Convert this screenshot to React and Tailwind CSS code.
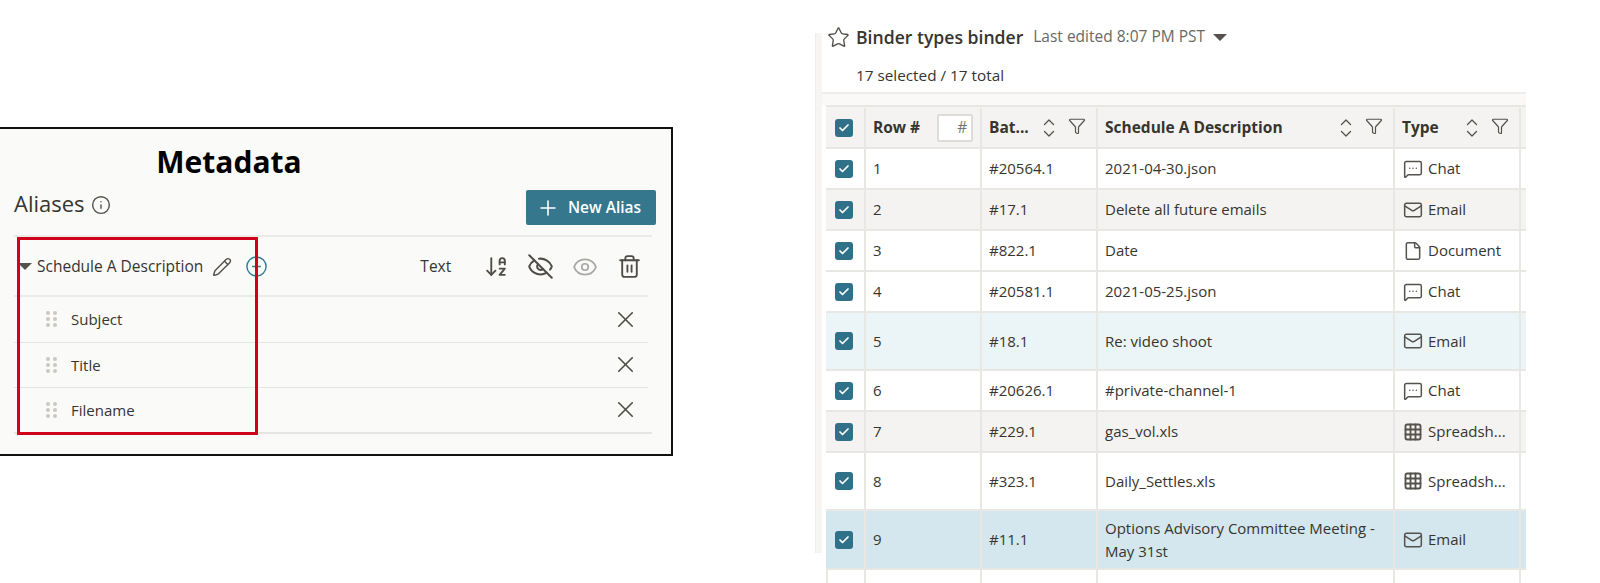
import React from "react";
import {
  ArrowDownAZ,
  Check,
  CirclePlus,
  Eye,
  EyeOff,
  File,
  Funnel,
  Grid3x3,
  Info,
  Mail,
  MessageSquareMore,
  Pencil,
  Plus,
  Star,
  Trash2,
  X,
} from "lucide-react";

const TYPES = {
  Chat: MessageSquareMore,
  Email: Mail,
  Document: File,
  "Spreadsh...": Grid3x3,
};

const ROWS = [
  { n: 1, bat: "#20564.1", desc: "2021-04-30.json", type: "Chat", h: "h-[41px]", bg: "bg-white" },
  { n: 2, bat: "#17.1", desc: "Delete all future emails", type: "Email", h: "h-[41px]", bg: "bg-[#f4f3f1]" },
  { n: 3, bat: "#822.1", desc: "Date", type: "Document", h: "h-[41px]", bg: "bg-white" },
  { n: 4, bat: "#20581.1", desc: "2021-05-25.json", type: "Chat", h: "h-[41px]", bg: "bg-white" },
  { n: 5, bat: "#18.1", desc: "Re: video shoot", type: "Email", h: "h-[58px]", bg: "bg-[#ebf4f7]" },
  { n: 6, bat: "#20626.1", desc: "#private-channel-1", type: "Chat", h: "h-[41px]", bg: "bg-white" },
  { n: 7, bat: "#229.1", desc: "gas_vol.xls", type: "Spreadsh...", h: "h-[41px]", bg: "bg-[#f4f3f1]" },
  { n: 8, bat: "#323.1", desc: "Daily_Settles.xls", type: "Spreadsh...", h: "h-[58px]", bg: "bg-white" },
  { n: 9, bat: "#11.1", desc: "Options Advisory Committee Meeting - May 31st", type: "Email", h: "h-[59px]", bg: "bg-[#d4e7ee]" },
];

const Checkbox = () => (
  <span className="flex h-[18px] w-[18px] items-center justify-center rounded-[3px] bg-[#2f7189]">
    <Check size={12} strokeWidth={3.5} className="text-white" />
  </span>
);

const SortFilter = ({ sortClass }) => (
  <>
    <svg width="12" height="20" viewBox="0 0 12 20" fill="none" stroke="#55524e" strokeWidth="1.3" strokeLinecap="round" strokeLinejoin="round" className={`shrink-0 ${sortClass}`}>
      <path d="M1.5 6.5 6 2l4.5 4.5" />
      <path d="M1.5 13.5 6 18l4.5-4.5" />
    </svg>
    <Funnel size={18} strokeWidth={1.6} className="ml-[13px] mb-[3px] shrink-0 text-[#55524e]" />
  </>
);

const AliasRow = ({ label }) => (
  <div className="flex h-[45.5px] items-center border-b border-[#e6e5e2] pl-[32px] pr-[9px] last:-mr-[4px] last:border-b-2 last:pr-[13px]">
    <span className="grid grid-cols-2 gap-x-[3px] gap-y-[2px]">
      {[0, 1, 2, 3, 4, 5].map((d) => (
        <span key={d} className="h-[4px] w-[4px] rounded-full bg-[#c9c8c5]" />
      ))}
    </span>
    <span className="ml-[14px] text-[15px] text-[#37352f]">{label}</span>
    <X size={27} strokeWidth={1.4} className="ml-auto text-[#4f4c48]" />
  </div>
);

const MetadataPanel = () => (
  <div className="relative mt-[127px] h-[329px] w-[673px] shrink-0 border-y-2 border-r-2 border-[#111] bg-[#fafaf8]">
    <h1 className="mt-[14px] w-[458px] text-center text-[30px] font-bold leading-[38px] text-black">Metadata</h1>
    <div className="mt-[9px] flex items-start justify-between pl-[14px] pr-[15px]">
      <div className="-mt-[2px] flex items-center gap-[6px]">
        <span className="text-[22px] leading-[30px] text-[#37352f]">Aliases</span>
        <Info size={20} strokeWidth={1.7} className="mt-[3px] text-[#55524e]" />
      </div>
      <button className="flex h-[35px] w-[130px] items-center justify-center gap-[8px] rounded-[2px] bg-[#35778d] pr-[5px] text-[15.5px] font-semibold text-white">
        <Plus size={24} strokeWidth={1.6} />
        New Alias
      </button>
    </div>
    <div className="mt-[10px] ml-[14px] mr-[19px] h-[60px] border-t-2 border-[#ecebe8] pt-[1px]">
      <div className="flex h-full items-center pl-[4px]">
        <span className="h-0 w-0 border-x-[7px] border-t-[7px] border-x-transparent border-t-[#55524e]" />
        <span className="ml-[5px] text-[15.5px] text-[#37352f]">Schedule A Description</span>
        <Pencil size={20} strokeWidth={1.7} className="ml-[9px] text-[#55524e]" />
        <CirclePlus size={23} strokeWidth={1.5} className="ml-[13px] text-[#2f7f9b]" />
        <span className="ml-[152px] text-[15.5px] text-[#37352f]">Text</span>
        <ArrowDownAZ size={25} strokeWidth={1.8} className="ml-[33px] text-[#4f4c48]" />
        <EyeOff size={27} strokeWidth={1.8} className="ml-[18px] text-[#4f4c48]" />
        <Eye size={26} strokeWidth={1.6} className="ml-[18px] text-[#a9a8a5]" />
        <Trash2 size={25} strokeWidth={1.8} className="ml-[19px] text-[#4f4c48]" />
      </div>
    </div>
    <div className="ml-[14px] mr-[23px] border-t-2 border-[#ecebe8]">
      {["Subject", "Title", "Filename"].map((label) => (
        <AliasRow key={label} label={label} />
      ))}
    </div>
    {/* red highlight drawn over the panel */}
    <div className="absolute left-[17px] top-[108px] h-[198px] w-[241px] border-[3px] border-[#d0021b]" />
  </div>
);

const Row = ({ row }) => {
  const Icon = TYPES[row.type];
  return (
    <div className={`flex ${row.h} ${row.bg} border-b-2 border-[#e8e7e4] text-[15px] text-[#37352f]`}>
      <div className="flex w-[38px] shrink-0 items-center pl-[9px]">
        <Checkbox />
      </div>
      <div className="flex w-[116px] shrink-0 items-center border-l-2 border-[#e8e7e4] pl-[7px]">{row.n}</div>
      <div className="flex w-[116px] shrink-0 items-center border-l-2 border-[#e8e7e4] pl-[7px]">{row.bat}</div>
      <div className="flex w-[297px] shrink-0 items-center border-l-2 border-[#e8e7e4] pl-[7px] pr-[8px] leading-[23px]">{row.desc}</div>
      <div className="flex w-[126px] shrink-0 items-center gap-[5px] border-l-2 border-[#e8e7e4] pl-[8px]">
        <Icon size={20} strokeWidth={row.type === "Spreadsh..." ? 2.2 : 1.8} className="shrink-0 text-[#55524e]" />
        {row.type}
      </div>
      <div className="flex-1 border-l-2 border-[#e8e7e4]" />
    </div>
  );
};

const BinderPanel = () => (
  <div className="ml-[142px] mt-[33px] flex h-[550px] w-[711px] shrink-0">
    <div className="h-[520px] w-[7px] shrink-0 border-l border-[#eeedeb] bg-[#f6f5f3]" />
    <div className="w-[704px]">
      <div className="-mt-[8px] flex h-[24px] items-center pl-[5px]">
        <Star size={23} strokeWidth={1.4} className="text-[#4f4c48]" />
        <span className="ml-[6px] text-[17.6px] font-semibold text-[#37352f]">Binder types binder</span>
        <span className="ml-[10px] text-[15.5px] text-[#6b6864]">Last edited 8:07 PM PST</span>
        <span className="ml-[8px] h-0 w-0 border-x-[7px] border-t-[7px] border-x-transparent border-t-[#55524e]" />
      </div>
      <div className="mt-[11px] h-[34px] border-b-2 border-[#eeedeb] pl-[34px] text-[15.3px] leading-[30px] text-[#37352f]">
        17 selected / 17 total
      </div>
      <div className="h-[11px] bg-[#faf9f7]" />
      <div className="ml-[4px]">
        <div className="flex h-[44px] border-y-2 border-[#e8e7e4] bg-[#f4f3f1] pt-[1px] text-[15.5px] font-bold text-[#37352f]">
          <div className="flex w-[38px] shrink-0 items-center pl-[9px]">
            <Checkbox />
          </div>
          <div className="flex w-[116px] shrink-0 items-center border-l-2 border-[#e8e7e4] pl-[7px]">
            Row #
            <span className="ml-[17px] flex h-[28px] w-[36px] items-center justify-end rounded-[2px] border-2 border-[#dddcd9] bg-white pr-[4px] font-normal text-[#77746f]">#</span>
          </div>
          <div className="flex w-[116px] shrink-0 items-center border-l-2 border-[#e8e7e4] pl-[7px]">
            Bat...
            <SortFilter sortClass="ml-[14px]" />
          </div>
          <div className="flex w-[297px] shrink-0 items-center border-l-2 border-[#e8e7e4] pl-[7px]">
            Schedule A Description
            <SortFilter sortClass="ml-[57px]" />
          </div>
          <div className="flex w-[126px] shrink-0 items-center border-l-2 border-[#e8e7e4] pl-[7px]">
            Type
            <SortFilter sortClass="ml-[27px]" />
          </div>
          <div className="flex-1 border-l-2 border-[#e8e7e4]" />
        </div>
        {ROWS.map((row) => (
          <Row key={row.n} row={row} />
        ))}
        <div className="flex h-[14px]">
          <div className="w-[38px] border-l-2 border-[#e8e7e4]" />
          <div className="w-[116px] border-l-2 border-[#e8e7e4]" />
          <div className="w-[116px] border-l-2 border-[#e8e7e4]" />
          <div className="w-[297px] border-l-2 border-[#e8e7e4]" />
          <div className="w-[126px] border-l-2 border-[#e8e7e4]" />
          <div className="flex-1 border-l-2 border-[#e8e7e4]" />
        </div>
      </div>
    </div>
  </div>
);

export default function App() {
  return (
    <div className="flex h-[583px] w-[1600px] overflow-hidden bg-white font-['Open_Sans',sans-serif]">
      <MetadataPanel />
      <BinderPanel />
    </div>
  );
}
